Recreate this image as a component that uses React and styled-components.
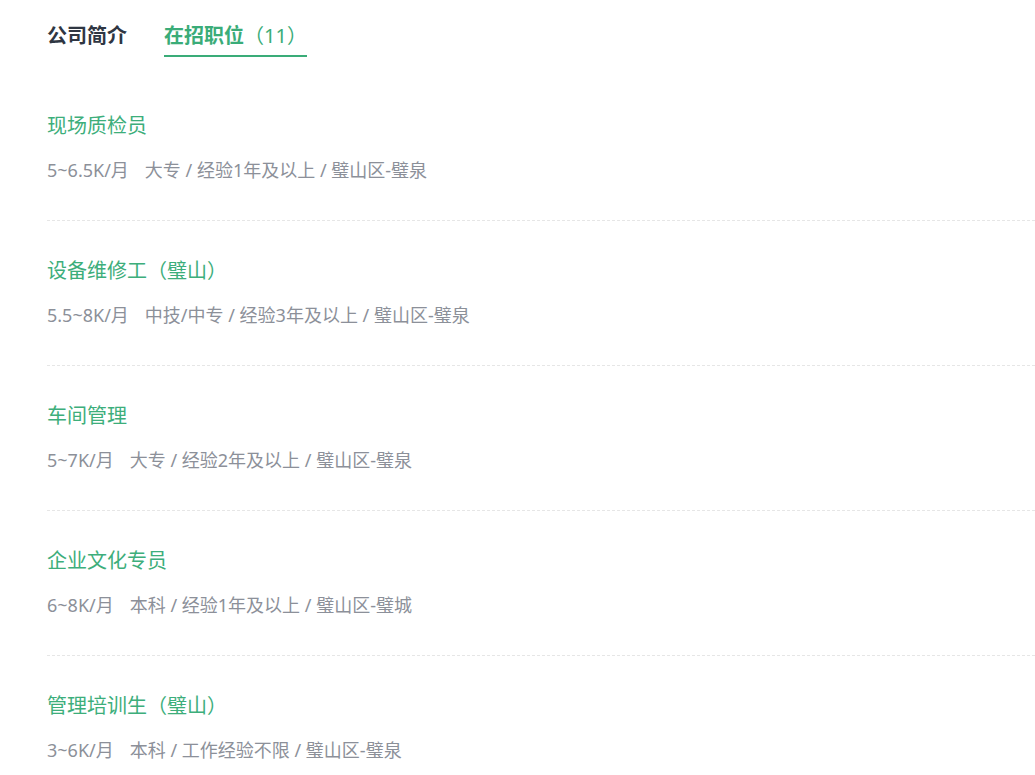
import React from "react";
import styled, { createGlobalStyle } from "styled-components";

const GlobalStyle = createGlobalStyle`
  html, body {
    margin: 0;
    padding: 0;
    background: #fff;
  }
  body {
    font-family: "Noto Sans", "Noto Sans CJK SC", sans-serif;
  }
`;

const Page = styled.div`
  width: 1035px;
  height: 775px;
  overflow: hidden;
  padding-left: 47px;
  box-sizing: border-box;
`;

const Tabs = styled.div`
  display: flex;
  gap: 37px;
  padding-top: 22px;
`;

const Tab = styled.div`
  font-size: 20px;
  line-height: 28px;
  font-weight: 700;
  color: ${(p) => (p.active ? "#3aac78" : "#2f3642")};
  padding-bottom: 5px;
  border-bottom: 2px solid ${(p) => (p.active ? "#3aac78" : "transparent")};
`;

const Count = styled.span`
  font-weight: 400;
`;

const List = styled.div`
  margin-top: 19px;
`;

const Item = styled.div`
  padding: 35px 0 35px;
  border-top: ${(p) => (p.first ? "none" : "1px dashed #e6e6e6")};
`;

const Title = styled.div`
  font-size: 20px;
  line-height: 30px;
  color: #3dae7b;
`;

const Meta = styled.div`
  margin-top: 14px;
  font-size: 18px;
  line-height: 30px;
  color: #8c9099;
`;

const Salary = styled.span`
  margin-right: 16px;
`;

const jobs = [
  { title: "现场质检员", salary: "5~6.5K/月", info: "大专 / 经验1年及以上 / 璧山区-璧泉" },
  { title: "设备维修工（璧山）", salary: "5.5~8K/月", info: "中技/中专 / 经验3年及以上 / 璧山区-璧泉" },
  { title: "车间管理", salary: "5~7K/月", info: "大专 / 经验2年及以上 / 璧山区-璧泉" },
  { title: "企业文化专员", salary: "6~8K/月", info: "本科 / 经验1年及以上 / 璧山区-璧城" },
  { title: "管理培训生（璧山）", salary: "3~6K/月", info: "本科 / 工作经验不限 / 璧山区-璧泉" },
];

export default function App() {
  return (
    <Page>
      <GlobalStyle />
      <Tabs>
        <Tab>公司简介</Tab>
        <Tab active>
          在招职位<Count>（11）</Count>
        </Tab>
      </Tabs>
      <List>
        {jobs.map((job, index) => (
          <Item key={job.title} first={index === 0}>
            <Title>{job.title}</Title>
            <Meta>
              <Salary>{job.salary}</Salary>
              {job.info}
            </Meta>
          </Item>
        ))}
      </List>
    </Page>
  );
}
